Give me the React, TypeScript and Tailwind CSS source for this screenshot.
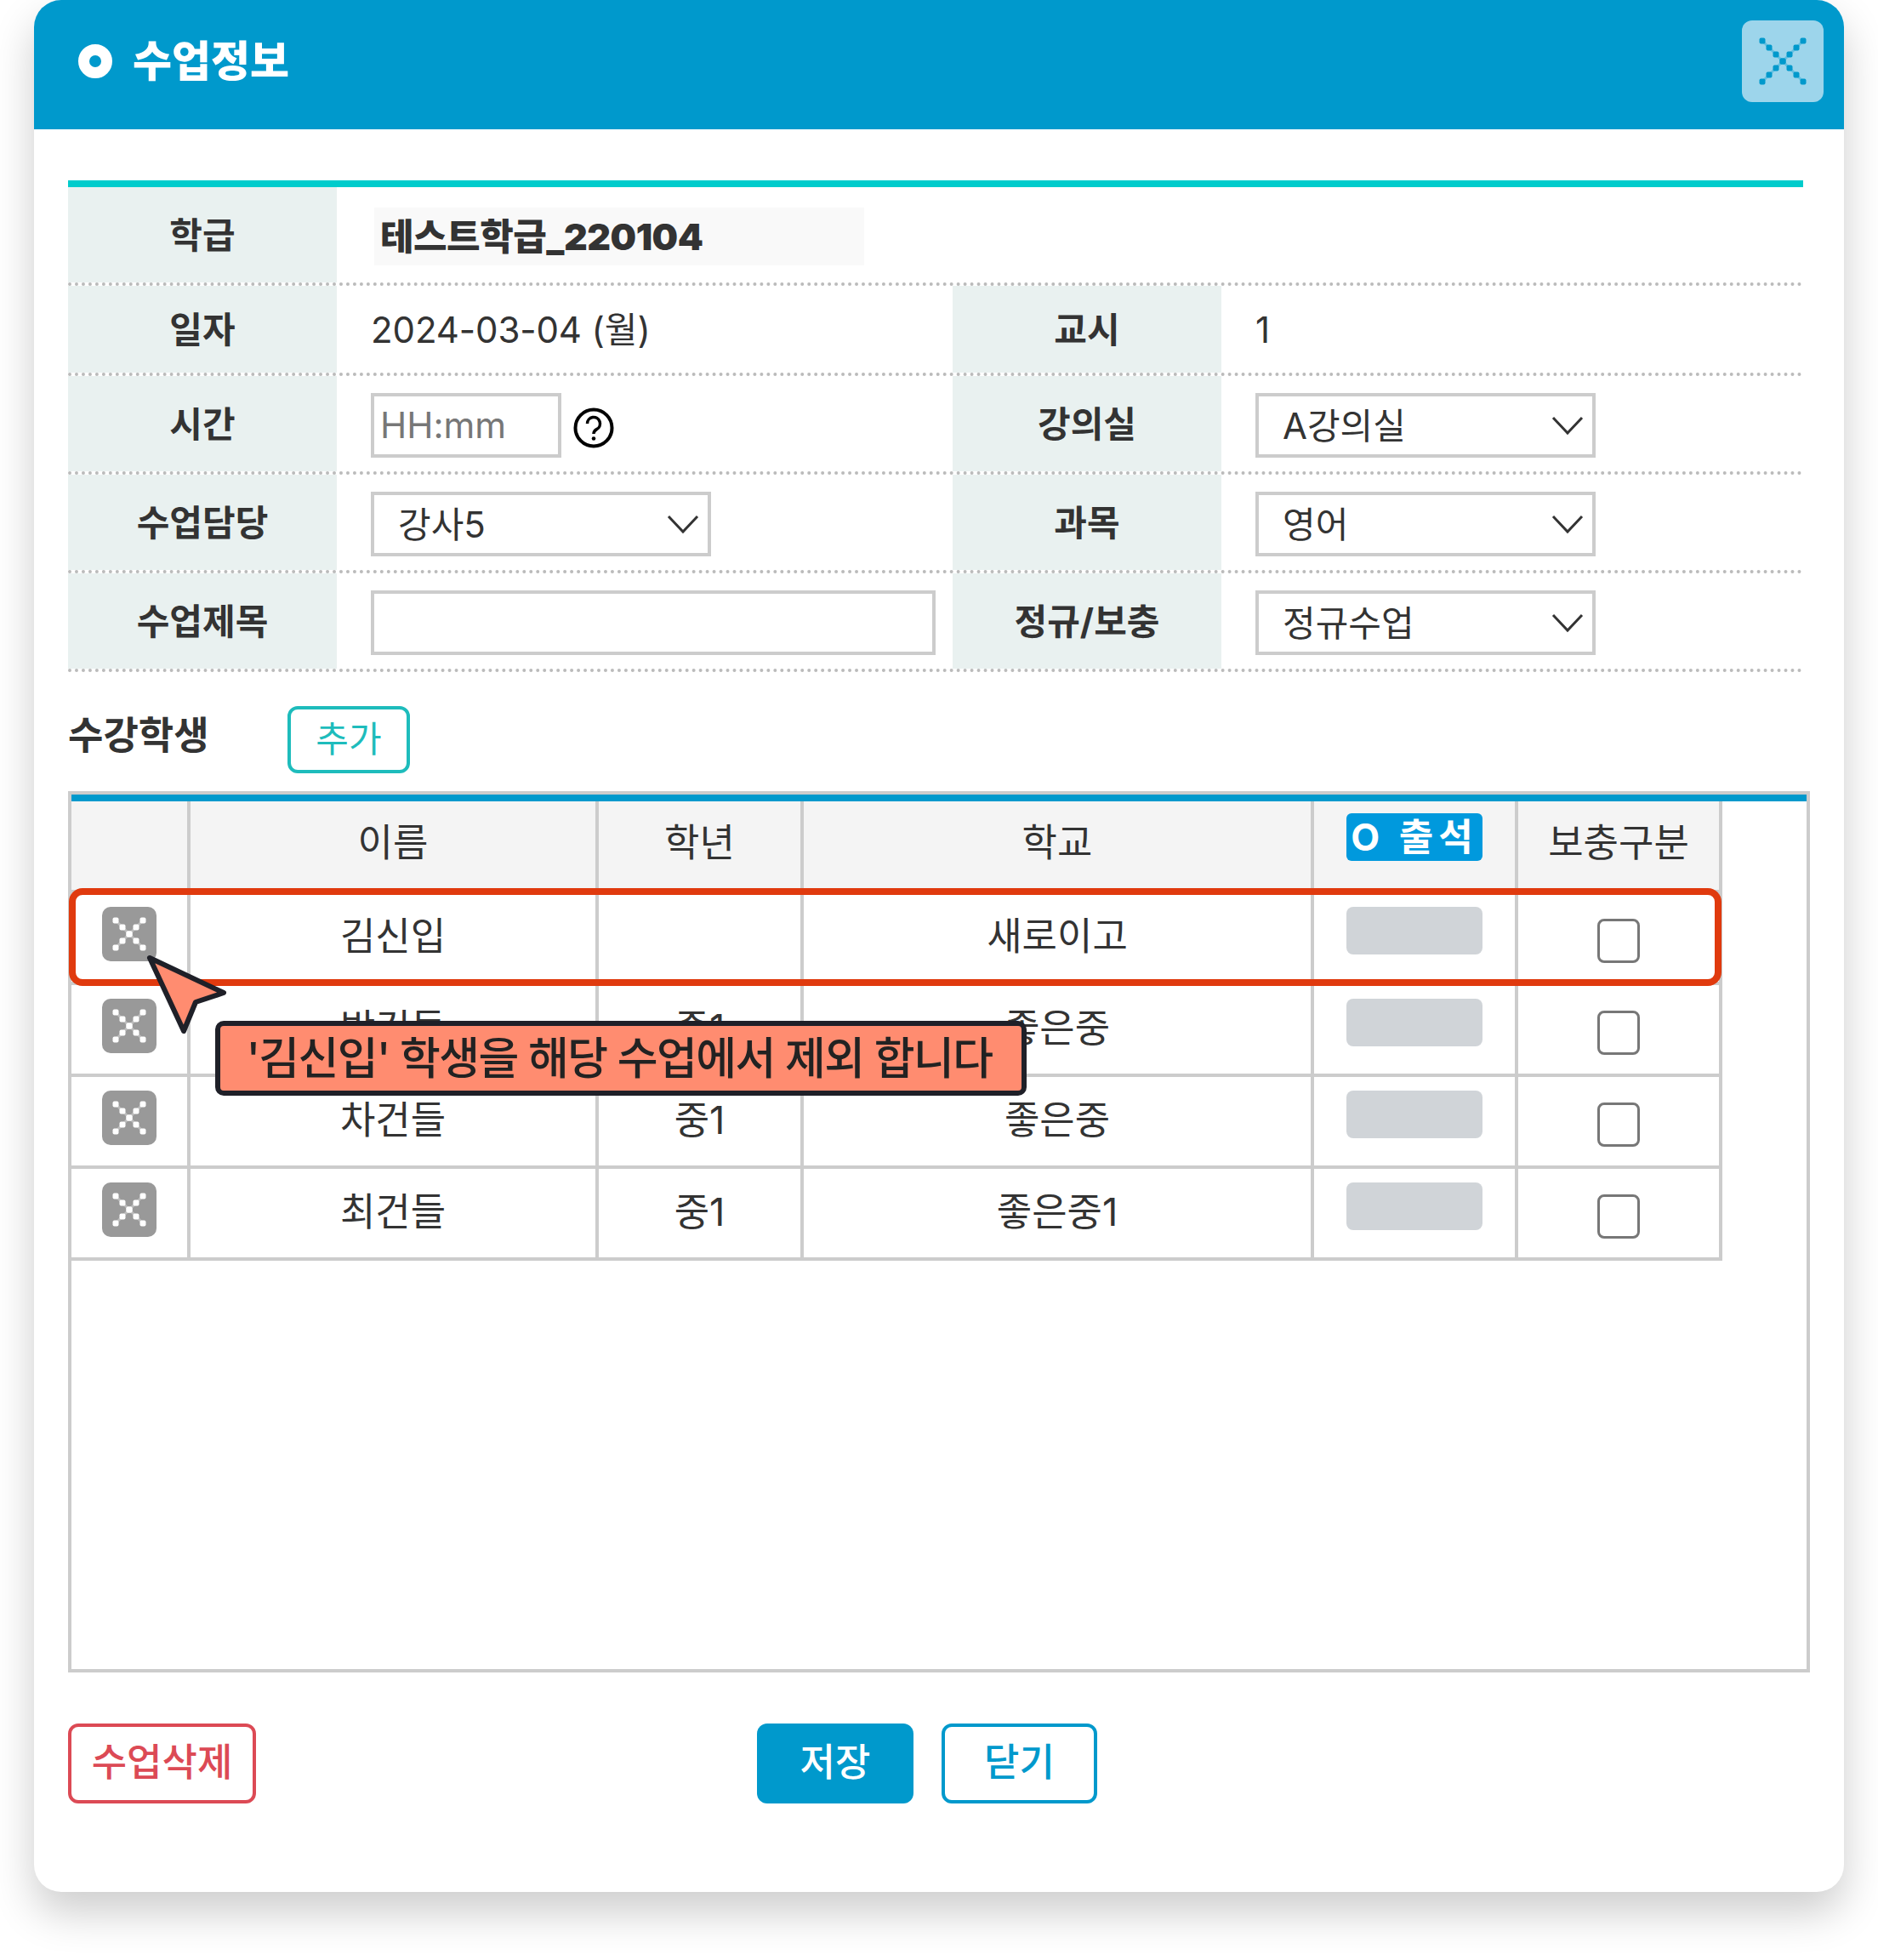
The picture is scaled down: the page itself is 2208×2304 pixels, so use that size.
import React from 'react';

const STUDENTS = [
  { name: '김신입', grade: '', school: '새로이고' },
  { name: '박건들', grade: '중1', school: '좋은중' },
  { name: '차건들', grade: '중1', school: '좋은중' },
  { name: '최건들', grade: '중1', school: '좋은중1' },
];

// dotted X used on the remove buttons and the header close button
function DottedX({ size, arm, color, dot = 7 }: { size: number; arm: number; color: string; dot?: number }) {
  const c = size / 2;
  const r = arm * 8;
  const steps: number[] = [];
  for (let i = -arm; i <= arm; i++) steps.push(i);
  return (
    <svg width={size} height={size} viewBox={`0 0 ${size} ${size}`}>
      <path d={`M${c - r} ${c - r} L${c + r} ${c + r} M${c - r} ${c + r} L${c + r} ${c - r}`} stroke={color} strokeWidth="3" opacity="0.35" />
      {steps.map(i => (
        <React.Fragment key={i}>
          <rect x={c + i * 8 - dot / 2} y={c + i * 8 - dot / 2} width={dot} height={dot} rx={2} fill={color} />
          <rect x={c + i * 8 - dot / 2} y={c - i * 8 - dot / 2} width={dot} height={dot} rx={2} fill={color} />
        </React.Fragment>
      ))}
    </svg>
  );
}

function HelpIcon() {
  return (
    <svg className="mt-[6px]" width="48" height="48" viewBox="0 0 48 48" fill="none">
      <circle cx="24" cy="24" r="21.5" stroke="#000" strokeWidth="4" />
      <path d="M16.5 19a7.5 7.5 0 1 1 11 6.6c-2.2 1.2-3.5 2.6-3.5 5.4" stroke="#000" strokeWidth="3.5" />
      <circle cx="24" cy="36.5" r="2.3" fill="#000" />
    </svg>
  );
}

function Label({ children }: { children: React.ReactNode }) {
  return (
    <div className="w-[316px] flex-none flex items-center justify-center bg-[#e9f1f0] text-[42px] font-bold text-[#333]">
      {children}
    </div>
  );
}

function SelectBox({ value }: { value: string }) {
  return (
    <div className="w-[400px] h-[76px] border-4 border-[#cccccc] pl-[28px] pr-[10px] flex items-center justify-between text-[42px] text-[#333]">
      <span>{value}</span>
      <svg width="38" height="24" viewBox="0 0 38 24" fill="none">
        <path d="M2 3 L19 21 L36 3" stroke="#333" strokeWidth="3" />
      </svg>
    </div>
  );
}

function Row({ className, children }: { className: string; children: React.ReactNode }) {
  return <div className={`flex border-b-4 border-dotted border-[#bbbbbb] ${className}`}>{children}</div>;
}

export default function App() {
  return (
    <div className="relative w-[2208px] h-[2304px] bg-white overflow-hidden px-[40px] font-['Inter','Noto_Sans_CJK_KR',sans-serif] text-[#333]">
      <div className="w-[2128px] h-[2224px] bg-white rounded-[32px] overflow-hidden shadow-[0_24px_50px_rgba(0,0,0,0.2)]">
        {/* Header */}
        <header className="h-[152px] bg-[#0099cc] flex items-start justify-between pl-[52px] pr-[24px]">
          <div className="flex items-center h-[144px] gap-[24px]">
            <div className="w-[40px] h-[40px] rounded-full border-[13px] border-white" />
            <h1 className="text-[50px] font-black text-white">수업정보</h1>
          </div>
          <button className="mt-[24px] w-[96px] h-[96px] rounded-[12px] bg-[#9dd5eb] flex items-center justify-center">
            <DottedX size={64} arm={3} color="#0099cc" />
          </button>
        </header>

        <div className="pl-[40px] pr-[48px] pt-[60px]">
          {/* Class info */}
          <div className="border-t-[8px] border-[#00cccc]">
            <Row className="h-[116px]">
              <Label>학급</Label>
              <div className="ml-[44px] mt-[24px] w-[576px] h-[68px] bg-[#f9f9f9] flex items-center pl-[7px] text-[43px] font-black tracking-[-0.5px]">
                테스트학급_220104
              </div>
            </Row>
            <Row className="h-[106px]">
              <Label>일자</Label>
              <div className="w-[724px] pl-[40px] flex items-center text-[42px] tracking-[-0.1px]">2024-03-04 (월)</div>
              <Label>교시</Label>
              <div className="pl-[40px] flex items-center text-[42px]">1</div>
            </Row>
            <Row className="h-[116px]">
              <Label>시간</Label>
              <div className="w-[724px] pl-[40px] pt-[4px] flex items-center gap-[14px]">
                <input
                  placeholder="HH:mm"
                  className="w-[224px] h-[76px] pb-[2px] border-4 border-[#cccccc] pl-[7px] text-[42px] placeholder:text-[#777] outline-none"
                />
                <HelpIcon />
              </div>
              <Label>강의실</Label>
              <div className="pl-[40px] pt-[4px] flex items-center">
                <SelectBox value="A강의실" />
              </div>
            </Row>
            <Row className="h-[116px]">
              <Label>수업담당</Label>
              <div className="w-[724px] pl-[40px] pt-[4px] flex items-center">
                <SelectBox value="강사5" />
              </div>
              <Label>과목</Label>
              <div className="pl-[40px] pt-[4px] flex items-center">
                <SelectBox value="영어" />
              </div>
            </Row>
            <Row className="h-[116px]">
              <Label>수업제목</Label>
              <div className="w-[724px] pl-[40px] pt-[4px] flex items-center">
                <input className="w-[664px] h-[76px] border-4 border-[#cccccc] outline-none" />
              </div>
              <Label>정규/보충</Label>
              <div className="pl-[40px] pt-[4px] flex items-center">
                <SelectBox value="정규수업" />
              </div>
            </Row>
          </div>

          {/* Students */}
          <div className="mt-[40px] flex items-start">
            <h2 className="w-[258px] h-[70px] flex items-center text-[45px] font-bold">수강학생</h2>
            <button className="w-[144px] h-[79px] pb-[3px] border-4 border-[#1ebcbc] rounded-[12px] text-[42px] text-[#1ebcbc]">
              추가
            </button>
          </div>

          <div className="mt-[21px] w-[2048px] h-[1036px] border-4 border-[#cccccc]">
            <div className="h-[8px] bg-[#0099cc]" />
            <table className="table-fixed w-[1941px] border-separate border-spacing-0 text-[45px] text-center">
              <colgroup>
                <col className="w-[140px]" />
                <col className="w-[480px]" />
                <col className="w-[241px]" />
                <col className="w-[600px]" />
                <col className="w-[240px]" />
                <col className="w-[240px]" />
              </colgroup>
              <thead>
                <tr className="h-[108px] bg-[#f4f4f4]">
                  <th className="border-r-4 border-b-4 border-[#cccccc]" />
                  <th className="border-r-4 border-b-4 border-[#cccccc] font-normal align-top pt-[19px] leading-[60px]">이름</th>
                  <th className="border-r-4 border-b-4 border-[#cccccc] font-normal align-top pt-[19px] leading-[60px]">학년</th>
                  <th className="border-r-4 border-b-4 border-[#cccccc] font-normal align-top pt-[19px] leading-[60px]">학교</th>
                  <th className="border-r-4 border-b-4 border-[#cccccc] align-top pt-[14px]">
                    <div className="mx-auto w-[160px] h-[56px] rounded-[6px] bg-[#0099dd] flex items-center justify-center text-[44px] font-bold text-white tracking-[6px]">
                      O 출석
                    </div>
                  </th>
                  <th className="border-r-4 border-b-4 border-[#cccccc] font-normal align-top pt-[19px] leading-[60px]">보충구분</th>
                </tr>
              </thead>
              <tbody>
                {STUDENTS.map(s => (
                  <tr key={s.name} className="h-[108px]">
                    <td className="border-r-4 border-b-4 border-[#cccccc] align-top pt-[16px]">
                      <div className="ml-[36px] w-[64px] h-[64px] rounded-[10px] bg-[#999999]">
                        <DottedX size={64} arm={2} color="#ffffff" />
                      </div>
                    </td>
                    <td className="border-r-4 border-b-4 border-[#cccccc] align-top pt-[21px] leading-[60px]">{s.name}</td>
                    <td className="border-r-4 border-b-4 border-[#cccccc] align-top pt-[21px] leading-[60px]">{s.grade}</td>
                    <td className="border-r-4 border-b-4 border-[#cccccc] align-top pt-[21px] leading-[60px]">{s.school}</td>
                    <td className="border-r-4 border-b-4 border-[#cccccc] align-top pt-[16px]">
                      <div className="mx-auto w-[160px] h-[56px] rounded-[8px] bg-[#d0d4d8]" />
                    </td>
                    <td className="border-r-4 border-b-4 border-[#cccccc] align-top pt-[30px]">
                      <div className="mx-auto w-[50px] h-[52px] rounded-[8px] border-[3px] border-[#777777]" />
                    </td>
                  </tr>
                ))}
              </tbody>
            </table>
          </div>

          {/* Footer buttons */}
          <div className="mt-[60px] flex">
            <button className="w-[221px] h-[94px] pb-[2px] border-4 border-[#dc4a55] rounded-[12px] text-[45px] font-medium text-[#dc4a55]">
              수업삭제
            </button>
            <button className="ml-[589px] w-[184px] h-[94px] pb-[2px] rounded-[12px] bg-[#0099cc] text-[45px] font-medium text-white">
              저장
            </button>
            <button className="ml-[33px] w-[183px] h-[94px] pb-[2px] border-4 border-[#0099cc] rounded-[12px] text-[45px] font-medium text-[#0099cc]">
              닫기
            </button>
          </div>
        </div>
      </div>

      {/* Annotation overlay */}
      <div className="absolute left-[81px] top-[1044px] w-[1943px] h-[115px] border-[8px] border-[#e03a0e] rounded-[16px]" />
      <svg className="absolute left-[160px] top-[1110px]" width="120" height="120" viewBox="0 0 120 120">
        <polygon points="16,16 103,57 70,68 56,102" fill="#ff8c70" stroke="#1f2028" strokeWidth="6" strokeLinejoin="round" />
      </svg>
      <div className="absolute left-[253px] top-[1200px] w-[954px] h-[88px] pt-[2px] pr-[4px] border-[6px] border-[#1f2028] rounded-[10px] bg-[#ff8c70] flex items-center justify-center text-[52px] font-medium tracking-[-1.6px] text-[#222]">
        '김신입' 학생을 해당 수업에서 제외 합니다
      </div>
    </div>
  );
}
